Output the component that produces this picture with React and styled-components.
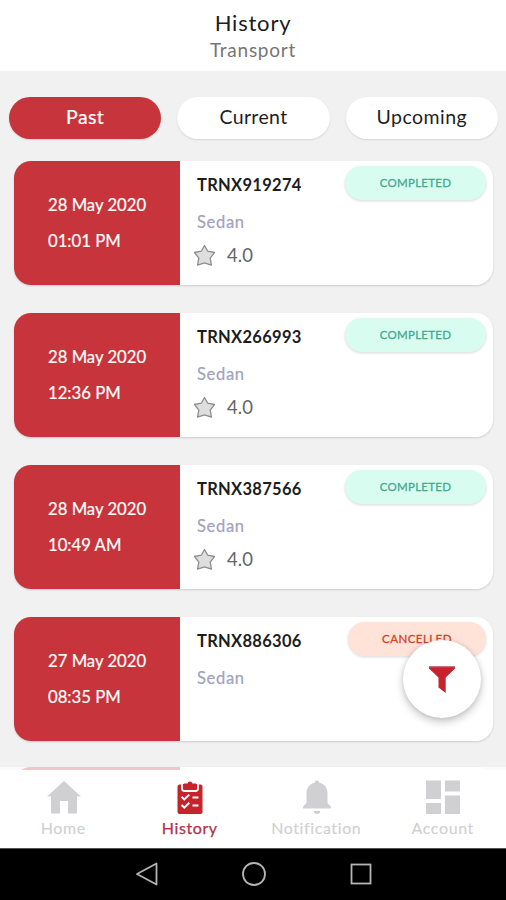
import React from 'react'
import styled, { createGlobalStyle } from 'styled-components'

const GlobalStyle = createGlobalStyle`
    * {
        box-sizing: border-box;
    }
    body {
        margin: 0;
        font-family: Lato, "Liberation Sans", sans-serif;
        background: #f1f1f1;
    }
    button {
        font-family: inherit;
        border: 0;
        padding: 0;
    }
`

const Screen = styled.div`
    position: relative;
    display: flex;
    flex-direction: column;
    width: 506px;
    height: 900px;
    overflow: hidden;
    background: #f1f1f1;
`

const Header = styled.header`
    flex: none;
    height: 71px;
    padding-top: 9px;
    background: #fff;
    text-align: center;
    h1 {
        margin: 0;
        font-size: 22px;
        line-height: 28px;
        font-weight: 400;
        letter-spacing: 0.8px;
        color: #1c1c1c;
    }
    p {
        margin: 0;
        font-size: 19px;
        line-height: 26px;
        letter-spacing: 0.75px;
        color: #767676;
    }
`

const Tabs = styled.div`
    flex: none;
    display: grid;
    grid-template-columns: repeat(3, 1fr);
    gap: 16px;
    padding: 26px 8px 22px 9px;
`

const Tab = styled.button`
    height: 42px;
    padding-bottom: 2px;
    border-radius: 21px;
    font-size: 19.5px;
    line-height: 40px;
    letter-spacing: ${props => props.$spacing};
    -webkit-text-stroke: ${props => props.$active ? '0.2px' : '0'};
    color: ${props => props.$active ? '#fff' : '#1e1e1e'};
    background: ${props => props.$active ? '#c8343b' : '#fff'};
    box-shadow: 0 1px 2px rgba(0,0,0,0.12);
`

const List = styled.main`
    flex: 1;
    min-height: 0;
    display: flex;
    flex-direction: column;
    gap: 28px;
    padding: 0 13px 0 14px;
`

const Card = styled.article`
    flex: none;
    display: flex;
    height: 124px;
    border-radius: 17px;
    overflow: hidden;
    background: #fff;
    box-shadow: 0 1px 2px rgba(0,0,0,0.16);
    &:nth-child(5) {
        margin-top: -2px;
    }
`

const When = styled.div`
    width: 166px;
    padding: 26px 0 0 34px;
    background: #c8343b;
    color: #fff;
    font-size: 16.7px;
    line-height: 36px;
    letter-spacing: 0;
    -webkit-text-stroke: 0.2px;
    white-space: nowrap;
`

const Details = styled.div`
    flex: 1;
    display: flex;
    justify-content: space-between;
    padding: 5px 7px 0 17px;
`

const Code = styled.div`
    margin-top: 7px;
    font-size: 16.5px;
    line-height: 24px;
    font-weight: 700;
    letter-spacing: 0.3px;
    color: #1d1d1d;
`

const Vehicle = styled.div`
    margin-top: 13px;
    font-size: 16.5px;
    line-height: 24px;
    letter-spacing: 0.7px;
    -webkit-text-stroke: 0.2px;
    color: #a0a2bf;
`

const Rating = styled.div`
    display: flex;
    align-items: center;
    gap: 11px;
    margin: 8px 0 0 -4px;
    font-size: 18.5px;
    line-height: 26px;
    letter-spacing: 0.1px;
    color: #666;
`

const Badge = styled.div`
    width: ${props => props.$cancelled ? '138px' : '141px'};
    height: 34px;
    border-radius: 17px;
    font-size: 11.5px;
    line-height: 33px;
    text-align: center;
    letter-spacing: ${props => props.$cancelled ? '0.45px' : '0.25px'};
    -webkit-text-stroke: 0.3px;
    color: ${props => props.$cancelled ? '#cf4527' : '#47a890'};
    background: ${props => props.$cancelled ? '#ffe3d9' : '#d8fdf0'};
    box-shadow: 0 1px 3px rgba(0,0,0,0.16);
`

const FilterButton = styled.button`
    position: absolute;
    right: 25px;
    bottom: 182px;
    display: flex;
    align-items: center;
    justify-content: center;
    width: 78px;
    height: 78px;
    border-radius: 50%;
    background: #fff;
    box-shadow: 0 4px 9px rgba(0,0,0,0.22), 0 0 4px rgba(0,0,0,0.1);
`

const BottomNav = styled.nav`
    position: relative;
    flex: none;
    display: grid;
    grid-template-columns: repeat(4, 1fr);
    height: 81px;
    margin-top: -1px;
    border-top: 3px solid rgba(255,255,255,0.72);
    background: #fff;
    background-clip: padding-box;
`

const NavItem = styled.div`
    display: flex;
    flex-direction: column;
    align-items: center;
    padding-top: 9px;
    font-size: 16px;
    line-height: 22px;
    letter-spacing: 0.6px;
    color: ${props => props.$active ? '#b23346' : '#d0d0d2'};
    -webkit-text-stroke: ${props => props.$active ? '0.25px' : '0.1px'};
    svg {
        margin: 0 0 2px 1px;
    }
`

const SystemBar = styled.footer`
    flex: none;
    display: flex;
    align-items: center;
    justify-content: center;
    gap: 82px;
    height: 52px;
    padding-bottom: 2px;
    border-top: 1px solid #555;
    background: #000;
`

const StarIcon = () => (
    <svg width="23" height="23" viewBox="0 0 23 23">
        <path d="M11.500 1.500l3.200 5.700 6.800 1.300-4.300 5.600 1.200 7-6.900-2.300-6.900 2.300 1.200-7L1.500 8.500l6.800-1.300z" fill="#dedede" stroke="#8e8e8e" strokeWidth="1.300" strokeLinejoin="round" />
    </svg>
)

const FilterIcon = () => (
    <svg width="28" height="28" viewBox="0 0 28 28">
        <path d="M1 1.500h26v2l-9.300 9V28L10.500 22.500v-10L1 3.500z" fill="#c8232d" />
        <path d="M1 2h26" stroke="#a85461" strokeWidth="1" />
    </svg>
)

const HomeIcon = () => (
    <svg width="36" height="36" viewBox="0 0 36 36">
        <path d="M18 2L1 17.500h4V34.500h9V22h8v12.500h9V17.500h4z" fill="#d0d0d2" />
    </svg>
)

const HistoryIcon = () => (
    <svg width="36" height="36" viewBox="0 0 36 36">
        <rect x="5.500" y="5.500" width="25" height="29.500" rx="2" fill="#c8232d" />
        <path d="M10 5v4.500q0 2.500 2.500 2.500h11q2.500 0 2.500-2.500V5" fill="#c8232d" stroke="#fff" strokeWidth="1.800" />
        <path d="M12 4.500h3.500a2.600 2.600 0 0 1 5 0H24v5.800H12z" fill="#c8232d" />
        <path d="M9.500 17.800l2.800 2.600 5-4.800M9.500 26l2.800 2.600 5-4.800M20.500 18.500h6M20.500 26.500h6" fill="none" stroke="#fff" strokeWidth="2" />
    </svg>
)

const BellIcon = () => (
    <svg width="36" height="36" viewBox="0 0 36 36">
        <path d="M18 1.500c1.400 0 2.200.8 2.300 2.200C26 5 28.500 9 28.500 14.500v9.500l3.500 3.700V29.500H4v-1.800L7.500 24v-9.500C7.500 9 10 5 15.700 3.700c.1-1.400.9-2.200 2.300-2.200zM14.800 32h6.400a3.200 3 0 0 1-6.400 0z" fill="#d0d0d2" />
    </svg>
)

const AccountIcon = () => (
    <svg width="36" height="36" viewBox="0 0 36 36">
        <path d="M1 1.500h15v18.500H1zM20 1.500h15v11H20zM1 24h15v11H1zM20 16.500h15V35H20z" fill="#d0d0d2" />
    </svg>
)

const trips = [
    { date: '28 May 2020', time: '01:01 PM', code: 'TRNX919274', status: 'COMPLETED', rating: '4.0' },
    { date: '28 May 2020', time: '12:36 PM', code: 'TRNX266993', status: 'COMPLETED', rating: '4.0' },
    { date: '28 May 2020', time: '10:49 AM', code: 'TRNX387566', status: 'COMPLETED', rating: '4.0' },
    { date: '27 May 2020', time: '08:35 PM', code: 'TRNX886306', status: 'CANCELLED' },
]

const navItems = [
    { label: 'Home', icon: <HomeIcon /> },
    { label: 'History', icon: <HistoryIcon />, active: true },
    { label: 'Notification', icon: <BellIcon /> },
    { label: 'Account', icon: <AccountIcon /> },
]

export default function App(){
    return (
        <Screen>
            <GlobalStyle />
            <Header>
                <h1>History</h1>
                <p>Transport</p>
            </Header>
            <Tabs>
                <Tab $active $spacing="0.4px">Past</Tab>
                <Tab $spacing="0.35px">Current</Tab>
                <Tab $spacing="0.45px">Upcoming</Tab>
            </Tabs>
            <List>
                {trips.map(trip => (
                    <Card key={trip.code}>
                        <When>
                            <div>{trip.date}</div>
                            <div>{trip.time}</div>
                        </When>
                        <Details>
                            <div>
                                <Code>{trip.code}</Code>
                                <Vehicle>Sedan</Vehicle>
                                {trip.rating && <Rating><StarIcon />{trip.rating}</Rating>}
                            </div>
                            <Badge $cancelled={trip.status === 'CANCELLED'}>{trip.status}</Badge>
                        </Details>
                    </Card>
                ))}
                <Card>
                    <When />
                </Card>
            </List>
            <FilterButton aria-label="Filter"><FilterIcon /></FilterButton>
            <BottomNav>
                {navItems.map(item => (
                    <NavItem key={item.label} $active={item.active}>
                        {item.icon}
                        {item.label}
                    </NavItem>
                ))}
            </BottomNav>
            <SystemBar>
                <svg width="25" height="26" viewBox="0 0 25 26">
                    <path d="M22.500 2.500v21L3 13z" fill="none" stroke="#b5b5b5" strokeWidth="1.800" strokeLinejoin="round" />
                </svg>
                <svg width="26" height="26" viewBox="0 0 26 26">
                    <circle cx="13" cy="13" r="11" fill="none" stroke="#b5b5b5" strokeWidth="1.800" />
                </svg>
                <svg width="24" height="24" viewBox="0 0 24 24">
                    <rect x="2.500" y="2.500" width="19" height="19" fill="none" stroke="#b5b5b5" strokeWidth="1.800" />
                </svg>
            </SystemBar>
        </Screen>
    )
}
